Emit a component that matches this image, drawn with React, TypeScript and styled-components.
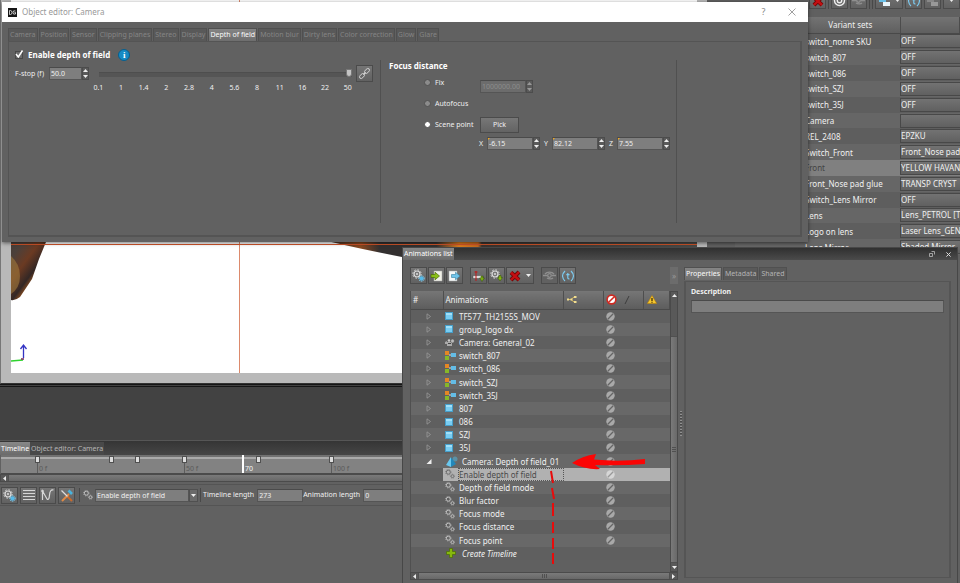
import React from "react";
import styled, { createGlobalStyle, css } from "styled-components";

const GlobalStyle = createGlobalStyle`
  * { box-sizing: border-box; }
  html, body { margin: 0; background: #606060; overflow: hidden; }
  body, button, input { font-family: "Noto Sans", "Open Sans", sans-serif; font-size: 8px; line-height: 12px; color: #f0f0f0; }
  button, input { margin: 0; padding: 0; border: 0; border-radius: 0; outline: none; }
  svg { display: block; flex: none; }
`;

const ui = css`font-family: "Noto Sans", "Open Sans", sans-serif; font-size: 7px;`;

/* ---------- page ---------- */
const Desktop = styled.div`
  position: relative;
  display: grid;
  grid-template-columns: minmax(0, 1fr) 253px;
  min-height: 100vh;
  overflow: hidden;
`;
const Workspace = styled.main`
  display: flex;
  flex-direction: column;
  min-width: 0;
  background: #606060;
`;
const Viewport = styled.section`
  height: 384px;
  padding: 0 10px 10px 10px;
  background: #b9b9b9;
  border-left: 1px solid #777;
  border-bottom: 1px solid #333;
  svg { width: 100%; height: 100%; background: #fff; }
`;
const Gutter = styled.div`
  height: 56px;
  flex: none;
  background: #424242;
  border-top: 3px double #161616;
`;

/* ---------- shared controls ---------- */
const ToolButton = styled.button<{ $wide?: boolean; $flat?: boolean }>`
  display: flex;
  align-items: center;
  justify-content: ${(p) => (p.$wide ? "space-between" : "center")};
  width: ${(p) => (p.$wide ? "28px" : "17px")};
  height: 17px;
  flex: none;
  padding: 0 ${(p) => (p.$wide ? "2px" : "0")};
  border: 1px solid #4b4b4b;
  background: ${(p) => (p.$flat ? "#616161" : "linear-gradient(#757575, #616161)")};
`;
const Separator = styled.i`
  width: 1px;
  height: 14px;
  flex: none;
  background: #484848;
`;
const Field = styled.input<{ $w?: number }>`
  width: ${(p) => (p.$w ? p.$w + "px" : "100%")};
  height: 13px;
  min-width: 0;
  padding: 0 1px;
  border: 1px solid #555;
  border-top-color: #4a4a4a;
  background: #7e7e7e;
  ${ui}
  &:disabled { background: #6c6c6c; color: #8c8c8c; }
`;
const SpinBox = styled.span<{ $key?: boolean }>`
  display: flex;
  position: relative;
  ${(p) => p.$key && css`
    &::before {
      content: "";
      position: absolute;
      left: 1px;
      top: 1px;
      border: 1px solid transparent;
      border-left-color: #f2a81d;
      border-top-color: #f2a81d;
    }
  `}
`;
const Arrows = styled.span`
  display: grid;
  grid-template-rows: 1fr 1fr;
  width: 7px;
  border: 1px solid #4c4c4c;
  background: #5a5a5a;
`;
const ArrowButton = styled.button`
  display: grid;
  place-items: center;
  background: none;
  min-height: 0;
`;
const Tabs = styled.div`
  display: flex;
  gap: 1px;
`;
const Tab = styled.button<{ $state?: "active" | "dim" }>`
  height: 13px;
  padding: 0 1px;
  border: 1px solid #505050;
  border-bottom: 0;
  white-space: nowrap;
  ${ui}
  color: ${(p) => (p.$state === "active" ? "#fafafa" : p.$state === "dim" ? "#858585" : "#b4b4b4")};
  background: ${(p) => (p.$state === "active" ? "linear-gradient(#858585, #6e6e6e)" : "#595959")};
`;

const Tri = ({ up, color = "#eee" }: { up?: boolean; color?: string }) => (
  <svg width="5" height="3" viewBox="0 0 5 3"><path d={up ? "M0 3L2.5 0 5 3z" : "M0 0L2.5 3 5 0z"} fill={color} /></svg>
);
const Side = ({ right }: { right?: boolean }) => (
  <svg width="3" height="5" viewBox="0 0 3 5"><path d={right ? "M0 0L3 2.5 0 5z" : "M3 0L0 2.5 3 5z"} fill="#eee" /></svg>
);
function Spin({ value, label, w, disabled, keyed }: { value: string; label: string; w: number; disabled?: boolean; keyed?: boolean }) {
  const tone = disabled ? "#999" : "#eee";
  return (
    <SpinBox $key={keyed}>
      <Field $w={w} aria-label={label} defaultValue={value} disabled={disabled} />
      <Arrows>
        <ArrowButton aria-label={label + " up"} disabled={disabled}><Tri up color={tone} /></ArrowButton>
        <ArrowButton aria-label={label + " down"} disabled={disabled}><Tri color={tone} /></ArrowButton>
      </Arrows>
    </SpinBox>
  );
}

/* ---------- icons ---------- */
const Gears = ({ color = "#c9c9c9", size = 10 }: { color?: string; size?: number }) => (
  <svg width={size} height={size} viewBox="0 0 10 10" fill="none" stroke={color}>
    <circle cx="3.3" cy="3.2" r="2" strokeWidth=".9" /><circle cx="3.3" cy="3.2" r="2.8" strokeWidth=".6" strokeDasharray="1.1 1.1" />
    <circle cx="7.5" cy="7.2" r="1.4" strokeWidth=".8" /><circle cx="7.5" cy="7.2" r="2.1" strokeWidth=".5" strokeDasharray=".9 .8" />
  </svg>
);
const GearPlus = ({ tint }: { tint: string }) => (
  <svg width="13" height="13" viewBox="0 0 13 13">
    <circle cx="5" cy="5" r="3" fill="#777" stroke="#ddd" strokeWidth="1.2" /><circle cx="5" cy="5" r="4.2" fill="none" stroke="#ddd" strokeWidth="1" strokeDasharray="1.5 1.8" />
    <circle cx="5" cy="5" r="1" fill="#ddd" />
    {tint === "green"
      ? <path d="M9 6.5h2v2h1.5L10 12 7.500 8.500H9z" fill="#86b811" stroke="#35520a" strokeWidth=".5" />
      : <g fill="#55b9e8"><circle cx="9.500" cy="9.500" r="2.200" /><circle cx="9.500" cy="9.500" r="2.800" fill="none" stroke="#8ad6f7" strokeDasharray="1 1" /></g>}
  </svg>
);
const Import = () => (
  <svg width="13" height="12" viewBox="0 0 13 12"><path d="M4 1h8v10H4z" fill="#f1f1e8" stroke="#aaa" strokeWidth=".5" /><path d="M1 4.500h4V2.200L9.500 6 5 9.800V7.500H1z" fill="#8abf17" stroke="#4a6c08" strokeWidth=".7" /></svg>
);
const Export = () => (
  <svg width="13" height="12" viewBox="0 0 13 12"><path d="M1 1h8v10H1z" fill="#f4f7f8" stroke="#aaa" strokeWidth=".5" /><path d="M3.500 4.500h4V2.200L12 6 7.500 9.800V7.500h-4z" fill="#6fc4ea" stroke="#337fa3" strokeWidth=".6" /></svg>
);
const KeyTrack = () => (
  <svg width="13" height="12" viewBox="0 0 13 12"><path d="M1 5.500h10v3H1z" fill="#ddd" stroke="#333" strokeWidth=".4" /><path d="M4 1v10M2.500 2h3" stroke="#c01818" strokeWidth="1" /><path d="M9 6h2v2h1.500L10 11.500 7.500 8H9z" fill="#7aaa16" stroke="#35520a" strokeWidth=".5" /></svg>
);
const RedX = () => (
  <svg width="12" height="12" viewBox="0 0 12 12"><path d="M2 2.500L10 10M10 2L2 10" stroke="#6d0606" strokeWidth="4" /><path d="M2 2.500L10 10M10 2L2 10" stroke="#c30f12" strokeWidth="2.400" /></svg>
);
const Link = ({ color = "#d5d5d5" }: { color?: string }) => (
  <svg width="13" height="13" viewBox="0 0 13 13" fill="none" stroke={color}><ellipse cx="4" cy="9" rx="3" ry="1.800" transform="rotate(-45 4 9)" strokeWidth=".9" /><ellipse cx="9" cy="4" rx="3" ry="1.800" transform="rotate(-45 9 4)" strokeWidth=".9" /><path d="M5.300 7.700L7.700 5.300" /></svg>
);
const Orbit = ({ color = "#8f8f8f" }: { color?: string }) => (
  <svg width="13" height="9" viewBox="0 0 13 9" fill="none" stroke={color} strokeWidth="1.300"><path d="M0 4.500h4M9 4.500h4M2 3C4 .5 9 .5 11 3M4 7c2 1.300 5 1 6 0" /><circle cx="6.500" cy="4.500" r="1.800" /></svg>
);
const TimeCode = () => (
  <svg width="14" height="12" viewBox="0 0 14 12" fill="none" stroke="#7ccbf0" strokeWidth="1.200"><path d="M4 1Q1.800 3 1.500 6 1.800 9 4 11M10 1q2.200 2 2.500 5-.3 3-2.500 5M6.800 3v5q0 1 1.700 1M5.300 4.700h3.200" /></svg>
);
const TargetIcon = () => (
  <svg width="13" height="13" viewBox="0 0 13 13" fill="none" stroke="#eee" strokeWidth="1.400"><circle cx="6.500" cy="6.500" r="5" /><circle cx="6.500" cy="6.500" r="2.200" /></svg>
);
const Blocks = ({ gray }: { gray?: boolean }) => (
  <svg width="13" height="13" viewBox="0 0 13 13"><path d="M1 2h7v6H1z" fill={gray ? "#888" : "#69bfe7"} /><path d="M5 8h7v4H5z" fill={gray ? "#999" : "#e8f4fa"} /></svg>
);
const Lines = () => (
  <svg width="12" height="12" viewBox="0 0 12 12" fill="none" stroke="#d5d5d5"><path d="M0 1.500h12M0 4.500h12M0 7.500h12M0 10.500h12" /></svg>
);
const Curve = () => (
  <svg width="13" height="12" viewBox="0 0 13 12" fill="none" stroke="#d9d9d9" strokeWidth="1.200"><path d="M1.500 11V2L6 10Q8 12 8.500 6T12.500 1" /><path d="M0 2h3" /></svg>
);
const Tools = () => (
  <svg width="13" height="13" viewBox="0 0 13 13" fill="none"><path d="M2 12L9 5" stroke="#e08a45" strokeWidth="2" /><path d="M8.500 1.500l3.500 3.500" stroke="#48b4df" strokeWidth="2.600" /><path d="M1.500 1.500l7 7" stroke="#ddd" strokeWidth="1.200" /><path d="M7.500 7.500l4.500 4.500" stroke="#c9692b" strokeWidth="2" /></svg>
);
const Cube = () => (
  <svg width="8" height="8" viewBox="0 0 8 8"><path d="M0 0h8v8H0z" fill="#479fca" /><path d="M1 1h6v6H1z" fill="#7acdf2" /><path d="M1 1h6v2H1z" fill="#a3e0f8" /></svg>
);
const SwitchIcon = () => (
  <svg width="11" height="9" viewBox="0 0 11 9"><path d="M0 0h4v4H0z" fill="#e58624" /><path d="M0 5h4v4H0z" fill="#86b828" /><path d="M4 4h3" stroke="#ddd" /><path d="M6 2h5v4H6z" fill="#63bce6" /></svg>
);
const CameraIcon = () => (
  <svg width="10" height="9" viewBox="0 0 10 9"><path d="M0 4l2-1v3L0 6zM2 4h5v4H2z" fill="#aaa" /><circle cx="4" cy="2.500" r="1.300" fill="#ccc" /><circle cx="7.500" cy="3" r="1.900" fill="#bbb" stroke="#444" strokeWidth=".4" /><path d="M3 5h3v1H3z" fill="#444" /></svg>
);
const Pyramid = () => (
  <svg width="12" height="11" viewBox="0 0 12 11"><circle cx="9" cy="3" r="2.500" fill="#5b91a6" /><path d="M5 1L0 9l5 2z" fill="#69c8f0" /><path d="M5 1l5 7-5 3z" fill="#2388ba" /></svg>
);
const Plus = () => (
  <svg width="10" height="10" viewBox="0 0 10 10"><path d="M3.500.5h3v3h3v3h-3v3h-3v-3h-3v-3h3z" fill="#86b80d" stroke="#4a6b06" strokeWidth=".7" /></svg>
);
const Ban = ({ red, light }: { red?: boolean; light?: boolean }) => {
  const s = red ? 11 : 9;
  return <svg width={s} height={s} viewBox="0 0 10 10"><circle cx="5" cy="5" r="4.700" fill={red ? "#cf2a22" : light ? "#d6d6d6" : "#a9a9a9"} />{red && <circle cx="5" cy="5" r="3.200" fill="#fff" />}<path d="M2 8L8 2" stroke={red ? "#cf2a22" : light ? "#999" : "#656565"} strokeWidth="1.400" /></svg>;
};
const Branch = () => (
  <svg width="11" height="9" viewBox="0 0 11 9"><path d="M1 4.500h3L7 2M4 4.500L7 7" stroke="#d9b95a" fill="none" /><path d="M0 3.500h2v2H0zM3.500 3.500h2v2h-2zM7 1h2.500v2H7zM7 6h2.500v2H7z" fill="#f0dd91" /></svg>
);
const Warn = () => (
  <svg width="10" height="9" viewBox="0 0 10 9"><path d="M5 .5L9.700 8.500H.3z" fill="#f4c630" stroke="#b98209" strokeWidth=".6" /><path d="M5 3v3M5 6.800v1" stroke="#332200" strokeWidth="1.200" /></svg>
);
const Expander = ({ open }: { open?: boolean }) => (
  <svg width="6" height="7" viewBox="0 0 6 7"><path d={open ? "M5.500 1v5h-5z" : "M1 .8L4.500 3.500 1 6.200z"} fill={open ? "#eee" : "none"} stroke={open ? "none" : "#9a9a9a"} strokeWidth=".8" /></svg>
);

/* ---------- variant sets ---------- */
const VariantPanel = styled.aside`
  padding-left: 28px;
  background: #606060;
  overflow: hidden;
`;
const TopBar = styled.div`
  display: flex;
  align-items: flex-end;
  justify-content: flex-end;
  gap: 2px;
  height: 9px;
  margin-bottom: 8px;
  overflow: hidden;
`;
const VariantTable = styled.table`
  width: 100%;
  height: 238px;
  table-layout: fixed;
  border-collapse: collapse;
  th { height: 16px; padding: 0; font-weight: 400; background: linear-gradient(#737373, #5f5f5f); border-bottom: 1px solid #494949; border-right: 1px solid #4c4c4c; padding-left: 2px; }
  th:first-child { padding-left: 66px; }
  td { padding: 0; white-space: nowrap; overflow: hidden; line-height: 13px; }
`;
const VariantRow = styled.tr<{ $selected?: boolean; $alt?: boolean }>`
  background: ${(p) => (p.$selected ? "#808080" : p.$alt ? "#666" : "#5e5e5e")};
  td:first-child { padding-left: 70px; color: ${(p) => (p.$selected ? "#444" : "#f0f0f0")}; }
`;
const ValueCell = styled.div`
  height: 14px;
  border: 1px solid #484848;
  border-right: 0;
  background: linear-gradient(#727272, #606060);
  line-height: 12px;
`;
const variants = [
  ["switch_nome SKU", "OFF"], ["switch_807", "OFF"], ["switch_086", "OFF"], ["switch_SZJ", "OFF"], ["switch_35J", "OFF"],
  ["Camera", ""], ["REL_2408", "EPZKU"], ["Switch_Front", "Front_Nose pad"], ["Front", "YELLOW HAVAN"],
  ["Front_Nose pad glue", "TRANSP CRYST"], ["Switch_Lens Mirror", "OFF"], ["Lens", "Lens_PETROL [T"],
  ["Logo on lens", "Laser Lens_GEN"], ["Lens Mirror", "Shaded Mirror"],
];

/* ---------- timeline ---------- */
const TimelinePanel = styled.section`
  flex: 1;
  background: #616161;
`;
const DockTabs = styled.div`
  display: flex;
  height: 15px;
  padding-top: 1px;
  border-top: 1px solid #565656;
  background: linear-gradient(#353535, #464646);
`;
const DockTab = styled.button<{ $active?: boolean }>`
  padding: 0 1px;
  white-space: nowrap;
  ${ui}
  color: ${(p) => (p.$active ? "#fff" : "#b5b5b5")};
  background: ${(p) => (p.$active ? "linear-gradient(#888, #6b6b6b)" : "#494949")};
`;
const Ruler = styled.div`
  position: relative;
  height: 19px;
  margin-left: 1px;
  border-bottom: 1px solid #4b4b4b;
  background: linear-gradient(#717171 0 2px, #aaa 2px 4px, #828282 4px);
  overflow: hidden;
`;
const Key = styled.i`
  position: absolute;
  top: 1px;
  width: 5px;
  height: 7px;
  border: 1px solid #505050;
  background: #ddd;
`;
const Tick = styled.span<{ $head?: boolean }>`
  position: absolute;
  top: ${(p) => (p.$head ? "0" : "7px")};
  bottom: 0;
  padding-left: 1px;
  padding-top: ${(p) => (p.$head ? "8px" : "1px")};
  border-left: ${(p) => (p.$head ? "2px solid #fff" : "1px solid #5c5c5c")};
  color: ${(p) => (p.$head ? "#f5f5f5" : "#5b5b5b")};
  ${ui}
  line-height: 11px;
`;
const HScroll = styled.div`
  display: flex;
  align-items: center;
  height: 8px;
  padding: 0 2px;
  gap: 2px;
  border: 1px solid #4b4b4b;
  background: #585858;
`;
const HThumb = styled.div`
  display: grid;
  place-items: center;
  flex: 1;
  height: 6px;
  border: 1px solid #505050;
  border-width: 0 1px;
  background: linear-gradient(#7a7a7a, #686868);
`;
const TimelineBar = styled.div`
  display: flex;
  align-items: center;
  gap: 2px;
  height: 22px;
  margin-top: 2px;
  padding-left: 1px;
  border: 1px solid #545454;
  border-width: 1px 0;
  ${ui}
  label { display: flex; align-items: center; gap: 3px; white-space: nowrap; }
`;
const LengthField = styled.label`
  &:last-child { margin-left: -2px; }
`;
const Combo = styled.span`
  display: flex;
  width: 103px;
`;
const ComboArrow = styled.button`
  display: grid;
  place-items: center;
  width: 9px;
  flex: none;
  border: 1px solid #505050;
  background: #6a6a6a;
`;
const IconSlot = styled.span`
  display: flex;
  width: 4px;
  justify-content: center;
`;

/* ---------- object editor window ---------- */
const EditorWindow = styled.section`
  position: absolute;
  left: 2px;
  top: 2px;
  width: 84%;
  background: #616161;
  box-shadow: 0 1px 4px rgba(0, 0, 0, 0.55);
`;
const WindowTitle = styled.header`
  display: flex;
  align-items: center;
  gap: 5px;
  height: 20px;
  padding: 0 11px 0 6px;
  background: #fff;
  color: #999;
  h1 { flex: 1; margin: 0; font-size: 8px; font-weight: 400; }
`;
const TitleButton = styled.button`
  display: grid;
  place-items: center;
  width: 10px;
  margin-left: 14px;
  background: none;
  color: #888;
  font-size: 9px;
`;
const EditorBody = styled.div`
  padding: 6px 6px 5px;
`;
const EditorPane = styled.div`
  display: grid;
  grid-template-columns: 371px 297px minmax(0, 1fr);
  min-height: 196px;
  padding: 6px 0 6px 0;
  border: 2px solid #545454;
  border-width: 1px 2px 2px 1px;
  ${ui}
`;
const LensColumn = styled.div`
  padding: 0 0 0 6px;
`;
const EnableRow = styled.div`
  display: flex;
  align-items: center;
  gap: 5px;
  height: 14px;
`;
const SectionLabel = styled.label`
  padding-right: 3px;
  font-size: 8px;
  font-weight: 700;
  color: #fff;
`;
const Check = styled.input`
  appearance: none;
  width: 8px;
  height: 8px;
  border: 1px solid #484848;
  background: #6b6b6b;
`;
const CheckWrap = styled.span`
  position: relative;
  display: flex;
  svg { position: absolute; left: 0; bottom: 1px; pointer-events: none; }
`;
const Info = styled.span`
  display: grid;
  place-items: center;
  width: 12px;
  height: 12px;
  border-radius: 50%;
  background: #168ac4;
  border: 1px solid #075f8e;
  font: bold 9px/10px "Liberation Serif", serif;
  color: #fff;
`;
const StopRow = styled.div`
  display: flex;
  align-items: center;
  height: 23px;
`;
const StopLabel = styled.label`
  width: 34px;
  white-space: nowrap;
`;
const Slider = styled.input`
  appearance: none;
  flex: 1;
  min-width: 0;
  height: 10px;
  margin: 0 4px 0 10px;
  background: linear-gradient(transparent 3px, #4e4e4e 3px 4px, #555 4px 8px, transparent 8px);
  &::-webkit-slider-thumb {
    appearance: none;
    width: 6px;
    height: 8px;
    background: #c4c4c4;
    border: 1px solid #777;
    border-radius: 0 0 3px 3px;
    margin-top: -2px;
  }
`;
const StopEnd = styled.span`
  width: 7px;
`;
const Scale = styled.div`
  display: grid;
  grid-template-columns: repeat(12, 1fr);
  margin: -3px 21px 0 72px;
  text-align: center;
`;
const FocusColumn = styled.div`
  margin: 12px 0 6px;
  padding: 0 0 0 8px;
  border: 1px solid #505050;
  border-width: 0 1px;
`;
const FocusHeading = styled.h2`
  margin: 0;
  font-size: 8px;
  font-weight: 700;
  line-height: 12px;
  color: #fff;
`;
const FocusRow = styled.div`
  display: grid;
  grid-template-columns: 56px 1fr;
  align-items: center;
  height: 21px;
  margin-left: 35px;
  label { display: flex; align-items: center; gap: 4px; white-space: nowrap; }
`;
const LowField = styled.div`
  align-self: end;
`;
const Radio = styled.input`
  appearance: none;
  width: 7px;
  height: 7px;
  border: 1px solid #515151;
  border-radius: 50%;
  background: #8b8b8b;
  &:checked { background: #fff; }
`;
const PickButton = styled.button`
  width: 39px;
  height: 16px;
  border: 1px solid #4b4b4b;
  background: linear-gradient(#777, #636363);
  ${ui}
`;
const Coordinates = styled.div`
  display: flex;
  gap: 4px;
  margin: 2px 0 0 90px;
  label { display: flex; align-items: center; gap: 4px; }
`;

/* ---------- animations window ---------- */
const ListWindow = styled.section`
  position: absolute;
  left: 402px;
  right: 2px;
  top: 247px;
  bottom: 0;
  display: flex;
  flex-direction: column;
  border: 1px solid #474747;
  border-width: 1px 1px 0 1px;
  background: #616161;
`;
const ListTitle = styled.header`
  display: flex;
  align-items: stretch;
  height: 12px;
  padding-right: 4px;
  background: linear-gradient(#303030, #4b4b4b);
`;
const TitleGap = styled.span`
  flex: 1;
`;
const DockButton = styled(TitleButton)`
  margin-left: 6px;
`;
const ListBody = styled.div`
  display: grid;
  grid-template-columns: 268px 6px minmax(0, 1fr);
  flex: 1;
  min-height: 0;
  padding: 7px 6px 3px 7px;
`;
const Splitter = styled.div`
  display: grid;
  place-items: center;
  &::after {
    content: "";
    width: 2px;
    height: 25px;
    background: repeating-linear-gradient(#909090 0 1px, #484848 1px 2px, transparent 2px 3px);
  }
`;
const ListColumn = styled.div`
  display: flex;
  flex-direction: column;
  min-height: 0;
`;
const ListBar = styled.div`
  display: flex;
  gap: 1px;
  margin-bottom: 7px;
`;
const BarGap = styled.i`
  width: 5px;
`;
const More = styled.button`
  width: 8px;
  margin-left: auto;
  background: #6c6c6c;
  color: #999;
`;
const ListFrame = styled.div`
  display: grid;
  grid-template-columns: minmax(0, 1fr) 8px;
  flex: 1;
  min-height: 0;
  background: #606060;
  border: 1px solid #505050;
  border-width: 0 0 0 1px;
`;
const VScroll = styled.div`
  display: flex;
  flex-direction: column;
  align-items: center;
  gap: 3px;
  padding: 2px 0;
  border: 1px solid #4a4a4a;
  background: #595959;
`;
const VThumb = styled.div`
  display: grid;
  place-items: center;
  flex: 1;
  width: 6px;
  margin-top: 36px;
  border: 1px solid #505050;
  border-width: 1px 0;
  background: linear-gradient(90deg, #7a7a7a, #696969);
`;
const Grip = styled.i<{ $vertical?: boolean }>`
  width: ${(p) => (p.$vertical ? "4px" : "5px")};
  height: ${(p) => (p.$vertical ? "5px" : "4px")};
  background: repeating-linear-gradient(${(p) => (p.$vertical ? "0deg" : "90deg")}, #505050 0 1px, transparent 1px 2px);
`;
const AnimTable = styled.table`
  width: 100%;
  height: 269px;
  table-layout: fixed;
  border-collapse: collapse;
  th { height: 18px; padding: 0 0 0 2px; font-weight: 400; font-size: 8px; text-align: left; background: linear-gradient(#767676, #5d5d5d); border-right: 1px solid #4e4e4e; border-bottom: 1px solid #4a4a4a; }
  th:nth-child(4) { border-right: 0; }
  td { padding: 0; line-height: 11px; white-space: nowrap; }
`;
const Col = styled.col<{ $w: number }>`
  width: ${(p) => p.$w}px;
`;
const HeadIcon = styled.span`
  display: flex;
  padding-left: 1px;
`;
const AnimRow = styled.tr<{ $selected?: boolean; $alt?: boolean }>`
  background: ${(p) => (p.$alt ? "#686868" : "#5f5f5f")};
  ${(p) => p.$selected && css`
    td:not(:first-child) { background: #b1b1b1; color: #4b4b4b; }
  `}
`;
const TreeCell = styled.div`
  display: flex;
  padding-left: 15px;
`;
const NameCell = styled.div<{ $italic?: boolean; $wide?: boolean }>`
  display: grid;
  grid-template-columns: ${(p) => (p.$wide ? "19px" : "16px")} 1fr;
  align-items: center;
  font-style: ${(p) => (p.$italic ? "italic" : "normal")};
  svg { margin-left: ${(p) => (p.$wide ? "3px" : "2px")}; }
`;
const NameText = styled.span<{ $focus?: boolean }>`
  outline: ${(p) => (p.$focus ? "1px dotted #555" : "none")};
`;
const StatusCell = styled.div`
  display: flex;
  padding-left: 3px;
`;
const PropertyPane = styled.div`
  flex: 1;
  margin-top: 1px;
  padding: 4px 5px;
  border: 2px solid #555;
  border-width: 1px 2px;
  ${ui}
  font-weight: 700;
  label { display: grid; gap: 2px; }
  input { font-weight: 400; }
`;
const PropertyArea = styled(ListColumn)`
  padding-bottom: 2px;
`;
const Annotations = styled.svg`
  position: absolute;
  left: 540px;
  top: 448px;
  pointer-events: none;
`;

const shapes = { cube: <Cube />, camera: <CameraIcon />, switch: <SwitchIcon />, pyramid: <Pyramid />, gears: <Gears />, plus: <Plus /> };
type Shape = keyof typeof shapes;
const animations: { name: string; icon: Shape; level?: "open" | "child" | "new" }[] = [
  { name: "TF577_TH2155S_MOV", icon: "cube" }, { name: "group_logo dx", icon: "cube" }, { name: "Camera: General_02", icon: "camera" },
  { name: "switch_807", icon: "switch" }, { name: "switch_086", icon: "switch" }, { name: "switch_SZJ", icon: "switch" }, { name: "switch_35J", icon: "switch" },
  { name: "807", icon: "cube" }, { name: "086", icon: "cube" }, { name: "SZJ", icon: "cube" }, { name: "35J", icon: "cube" },
  { name: "Camera: Depth of field_01", icon: "pyramid", level: "open" },
  { name: "Enable depth of field", icon: "gears", level: "child" }, { name: "Depth of field mode", icon: "gears", level: "child" },
  { name: "Blur factor", icon: "gears", level: "child" }, { name: "Focus mode", icon: "gears", level: "child" },
  { name: "Focus distance", icon: "gears", level: "child" }, { name: "Focus point", icon: "gears", level: "child" },
  { name: "Create Timeline", icon: "plus", level: "new" },
];
const editorTabs = ["Camera", "Position", "Sensor", "Clipping planes", "Stereo", "Display", "Depth of field", "Motion blur", "Dirty lens", "Color correction", "Glow", "Glare"];
const stops = ["0.1", "1", "1.4", "2", "2.8", "4", "5.6", "8", "11", "16", "22", "50"];
const frameX = (frame: number) => Math.round(36 + frame * 2.94);

function SceneView() {
  return (
    <Viewport aria-label="Viewport">
      <svg>
        <defs>
          <linearGradient id="shell" x1="0" y1="0" x2=".7" y2="1">
            <stop offset="0" stopColor="#3f3a38" /><stop offset=".3" stopColor="#4c403a" /><stop offset=".5" stopColor="#6b3a22" /><stop offset=".68" stopColor="#332725" /><stop offset=".82" stopColor="#c0661f" /><stop offset="1" stopColor="#554030" />
          </linearGradient>
          <linearGradient id="rim" gradientUnits="userSpaceOnUse" x1="312" y1="0" x2="690" y2="0">
            <stop offset="0" stopColor="#332b29" /><stop offset=".1" stopColor="#8a481f" /><stop offset=".15" stopColor="#333030" /><stop offset=".3" stopColor="#333030" /><stop offset=".36" stopColor="#e07c1d" /><stop offset=".41" stopColor="#c4671d" /><stop offset=".42" stopColor="#3b332f" /><stop offset="1" stopColor="#4a4a48" />
          </linearGradient>
        </defs>
        <path d="M0 225H39L35 242 28 259 21 279 9 297Q4 301 0 300z" fill="url(#shell)" />
        <path d="M0 256q9 8 9 20t-9 18z" fill="#a07a3c" opacity=".6" />
        <path d="M316 241Q350 249 391 257H700V230H316z" fill="url(#rim)" />
        <rect x="228" y="0" width="1" height="373" fill="#dc8a6c" />
        <rect x="0" y="244" width="700" height="1" fill="#d4552a" />
        <path d="M12.500 358V346M9.500 349L12.500 345 15.500 349" stroke="#3434c4" fill="none" strokeWidth="1.300" />
        <path d="M0 361l12-1" stroke="#2fd32f" strokeWidth="1.500" /><path d="M10 359h3" stroke="#7a2a5a" strokeWidth="1.500" />
      </svg>
    </Viewport>
  );
}

function Timeline() {
  return (
    <TimelinePanel>
      <DockTabs><DockTab $active>Timeline</DockTab><DockTab>Object editor: Camera</DockTab></DockTabs>
      <Ruler>
        {[0, 50, 100].map((f) => <Tick key={f} style={{ left: frameX(f) }}>{f} f</Tick>)}
        {[0, 25, 34, 50, 75, 100].map((f) => <Key key={f} style={{ left: frameX(f) - 2 }} />)}
        <Tick $head style={{ left: frameX(70) - 1 }}>70</Tick>
      </Ruler>
      <HScroll><Side /><HThumb /></HScroll>
      <TimelineBar>
        <ToolButton aria-label="Add timeline"><GearPlus tint="blue" /></ToolButton>
        <ToolButton aria-label="Track view"><Lines /></ToolButton>
        <ToolButton aria-label="Curve view"><Curve /></ToolButton>
        <ToolButton aria-label="Tools"><Tools /></ToolButton>
        <IconSlot><Separator /></IconSlot>
        <Gears />
        <Combo>
          <Field aria-label="Timeline name" defaultValue="Enable depth of field" />
          <ComboArrow aria-label="Choose timeline"><Tri /></ComboArrow>
        </Combo>
        <Separator />
        <LengthField>Timeline length<Field $w={46} defaultValue="273" /></LengthField>
        <LengthField>Animation length<Field $w={60} defaultValue="0" /></LengthField>
      </TimelineBar>
    </TimelinePanel>
  );
}

function Variants() {
  return (
    <VariantPanel>
      <TopBar>
        <ToolButton aria-label="Delete"><RedX /></ToolButton>
        <Separator />
        <ToolButton aria-label="Target"><TargetIcon /></ToolButton>
        <ToolButton aria-label="Orbit"><Orbit /></ToolButton>
        <Separator /><Separator />
        <ToolButton $wide aria-label="Blocks"><Blocks /><Tri /></ToolButton>
        <ToolButton aria-label="Time"><TimeCode /></ToolButton>
        <ToolButton aria-label="Group"><Blocks gray /></ToolButton>
        <ToolButton aria-label="More"><Tri /></ToolButton>
      </TopBar>
      <VariantTable>
        <colgroup><Col $w={165} /><col /></colgroup>
        <thead><tr><th>Variant sets</th><th aria-label="Value" /></tr></thead>
        <tbody>
          {variants.map(([name, value], i) => (
            <VariantRow key={name} $alt={i % 2 === 1} $selected={name === "Front"}>
              <td>{name}</td><td><ValueCell>{value}</ValueCell></td>
            </VariantRow>
          ))}
        </tbody>
      </VariantTable>
    </VariantPanel>
  );
}

function ObjectEditor() {
  return (
    <EditorWindow>
      <WindowTitle>
        <svg width="9" height="9" viewBox="0 0 9 9"><path d="M0 0h9v9H0z" fill="#151515" /><path d="M1.500 2.500v4h1q1.500 0 1.500-2t-1.500-2zM7.500 3Q5 2 5 4.500T7.500 6V4.500H6.500" fill="none" stroke="#eee" strokeWidth=".8" /></svg>
        <h1>Object editor: Camera</h1>
        <TitleButton aria-label="Help">?</TitleButton>
        <TitleButton aria-label="Close"><svg width="8" height="8" viewBox="0 0 8 8"><path d="M.5.5l7 7M7.500.5l-7 7" stroke="#888" strokeWidth=".8" /></svg></TitleButton>
      </WindowTitle>
      <EditorBody>
        <Tabs>{editorTabs.map((t) => <Tab key={t} $state={t === "Depth of field" ? "active" : "dim"}>{t}</Tab>)}</Tabs>
        <EditorPane>
          <LensColumn>
            <EnableRow>
              <CheckWrap><Check type="checkbox" id="dof" defaultChecked /><svg width="9" height="8" viewBox="0 0 9 8"><path d="M1 4l2.300 3L7.500.5" stroke="#fff" strokeWidth="1.500" fill="none" /></svg></CheckWrap>
              <SectionLabel htmlFor="dof">Enable depth of field</SectionLabel>
              <Info>i</Info>
            </EnableRow>
            <StopRow>
              <StopLabel>F-stop (f)</StopLabel>
              <Spin label="F-stop" value="50.0" w={33} />
              <Slider type="range" aria-label="F-stop scale" defaultValue={100} />
              <ToolButton aria-label="Link"><Link /></ToolButton>
              <StopEnd />
            </StopRow>
            <Scale>{stops.map((s) => <span key={s}>{s}</span>)}</Scale>
          </LensColumn>
          <FocusColumn>
            <FocusHeading>Focus distance</FocusHeading>
            <FocusRow><label><Radio type="radio" name="focus" />Fix</label><LowField><Spin label="Fixed distance" value="1000000.00" w={46} disabled /></LowField></FocusRow>
            <FocusRow><label><Radio type="radio" name="focus" />Autofocus</label></FocusRow>
            <FocusRow><label><Radio type="radio" name="focus" defaultChecked />Scene point</label><PickButton>Pick</PickButton></FocusRow>
            <Coordinates>
              {[["X", "-6.15"], ["Y", "82.12"], ["Z", "7.55"]].map(([axis, v]) => (
                <label key={axis}>{axis}<Spin label={axis} value={v} w={46} keyed /></label>
              ))}
            </Coordinates>
          </FocusColumn>
        </EditorPane>
      </EditorBody>
    </EditorWindow>
  );
}

function AnimationsList() {
  return (
    <ListWindow>
      <ListTitle>
        <DockTab $active>Animations list</DockTab>
        <TitleGap />
        <DockButton aria-label="Float"><svg width="6" height="6" viewBox="0 0 6 6" fill="none" stroke="#bbb"><path d="M.5 2.500h3v3h-3zM2.500.5h3v3" strokeWidth=".8" /></svg></DockButton>
        <DockButton aria-label="Close list"><svg width="5" height="5" viewBox="0 0 6 6"><path d="M.5.5l5 5M5.500.5l-5 5" stroke="#ddd" strokeWidth="1.200" /></svg></DockButton>
      </ListTitle>
      <ListBody>
        <ListColumn>
          <ListBar>
            <ToolButton aria-label="New animation"><GearPlus tint="blue" /></ToolButton>
            <ToolButton aria-label="Import"><Import /></ToolButton>
            <ToolButton aria-label="Export"><Export /></ToolButton>
            <BarGap />
            <ToolButton aria-label="Add key"><KeyTrack /></ToolButton>
            <ToolButton aria-label="Add timeline"><GearPlus tint="green" /></ToolButton>
            <ToolButton $wide aria-label="Delete"><RedX /><Tri /></ToolButton>
            <BarGap />
            <ToolButton $flat aria-label="Orbit"><Orbit /></ToolButton>
            <ToolButton aria-label="Time"><TimeCode /></ToolButton>
            <More aria-label="More tools">»</More>
          </ListBar>
          <ListFrame>
            <div>
              <AnimTable>
                <colgroup><Col $w={32} /><Col $w={120} /><Col $w={40} /><Col $w={18} /><Col $w={22} /><col /></colgroup>
                <thead>
                  <tr>
                    <th>#</th><th>Animations</th>
                    <th aria-label="Links"><HeadIcon><Branch /></HeadIcon></th>
                    <th aria-label="Disabled"><Ban red /></th>
                    <th aria-label="Edit"><svg width="8" height="10" viewBox="0 0 8 10"><path d="M2 9L6 1" stroke="#3d3d3d" /></svg></th>
                    <th aria-label="Warnings"><HeadIcon><Warn /></HeadIcon></th>
                  </tr>
                </thead>
                <tbody>
                  {animations.map((a, i) => {
                    const selected = a.name === "Enable depth of field";
                    return (
                      <AnimRow key={a.name} $alt={i % 2 === 1} $selected={selected}>
                        <td>{(!a.level || a.level === "open") && <TreeCell><Expander open={a.level === "open"} /></TreeCell>}</td>
                        <td><NameCell $italic={a.level === "new"} $wide={a.level === "open" || a.level === "new"}>{selected ? <Gears color="#666" /> : shapes[a.icon]}<NameText $focus={selected}>{a.name}</NameText></NameCell></td>
                        <td />
                        <td>{a.level !== "new" && <StatusCell><Ban light={selected} /></StatusCell>}</td>
                        <td /><td />
                      </AnimRow>
                    );
                  })}
                </tbody>
              </AnimTable>
            </div>
            <VScroll><Tri up /><VThumb><Grip $vertical /></VThumb><Tri /></VScroll>
          </ListFrame>
          <HScroll><Side /><HThumb><Grip /></HThumb><Side right /></HScroll>
        </ListColumn>
        <Splitter />
        <PropertyArea>
          <Tabs><Tab $state="active">Properties</Tab><Tab>Metadata</Tab><Tab>Shared</Tab></Tabs>
          <PropertyPane><label>Description<Field /></label></PropertyPane>
        </PropertyArea>
      </ListBody>
    </ListWindow>
  );
}

export default function App() {
  return (
    <>
      <GlobalStyle />
      <Desktop>
        <Workspace><SceneView /><Gutter /><Timeline /></Workspace>
        <Variants />
        <ObjectEditor />
        <AnimationsList />
        <Annotations width="110" height="120" viewBox="0 0 110 120" aria-hidden="true">
          <path d="M32 15Q42 8 56 6L54 11.500Q80 14 105 11V16Q80 18 55 17L60 21Q46 22 32 15z" fill="#fb0505" />
          <path d="M11 23l2 12M12 40l2 11M13 55v13M13 74v11M13 90v11M13 105v11" stroke="#e80b0b" strokeWidth="2" />
        </Annotations>
      </Desktop>
    </>
  );
}
